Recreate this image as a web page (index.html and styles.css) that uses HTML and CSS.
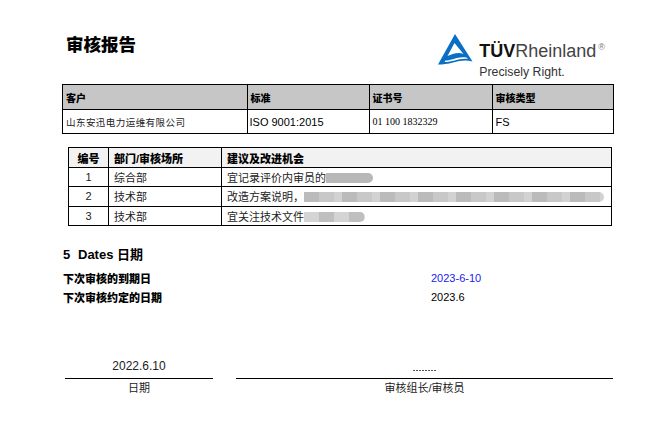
FILE: index.html
```html
<!DOCTYPE html>
<html lang="zh">
<head>
<meta charset="utf-8">
<title>审核报告</title>
<link rel="stylesheet" href="styles.css">
</head>
<body>
<main class="page">
  <header class="top">
    <h1 class="title">审核报告</h1>
    <div class="logo">
      <svg class="mark" viewBox="0 0 35 31" width="35" height="31" aria-hidden="true">
        <path fill="#0a6fc4" d="M17 0 L34.500 27.500 C28 25.500 22 26.500 15 28.500 C10 30 5 30.500 0 30.500 Z"/>
        <path fill="#fff" d="M16.500 9 L9.500 22 C14 20.500 20 17.500 25.500 20 Z"/>
        <path fill="#fff" d="M7.500 26.500 C14 26.500 20 22 28.500 23.500 L30 25 C22 23.500 15 28 6.500 28 Z"/>
      </svg>
      <div class="brand">
        <div class="brand-name"><b>TÜV</b>Rheinland<sup class="reg">®</sup></div>
        <div class="brand-tag">Precisely Right.</div>
      </div>
    </div>
  </header>

  <table class="info">
    <colgroup><col class="c1"><col class="c2"><col class="c3"><col class="c4"></colgroup>
    <tr class="shade"><th>客户</th><th>标准</th><th>证书号</th><th>审核类型</th></tr>
    <tr>
      <td class="serif-cjk">山东安迅电力运维有限公司</td>
      <td class="big tight">ISO 9001:2015</td>
      <td class="serif">01 100 1832329</td>
      <td class="big">FS</td>
    </tr>
  </table>

  <table class="findings">
    <colgroup><col class="n1"><col class="n2"><col></colgroup>
    <tr class="light"><th class="mid">编号</th><th>部门/审核场所</th><th>建议及改进机会</th></tr>
    <tr><td class="mid">1</td><td>综合部</td><td>宜记录评价内审员的<span class="blur w1"></span></td></tr>
    <tr><td class="mid">2</td><td>技术部</td><td>改造方案说明，<span class="blur w2"></span></td></tr>
    <tr><td class="mid">3</td><td>技术部</td><td>宜关注技术文件<span class="blur w3"></span></td></tr>
  </table>

  <h2 class="section"><span class="num">5</span>Dates 日期</h2>
  <dl class="dates">
    <div class="date-row"><dt>下次审核的到期日</dt><dd class="blue">2023-6-10</dd></div>
    <div class="date-row"><dt>下次审核约定的日期</dt><dd>2023.6</dd></div>
  </dl>

  <div class="signs">
    <div class="sign left">
      <div class="sign-val">2022.6.10</div>
      <div class="sign-label">日期</div>
    </div>
    <div class="sign right">
      <div class="sign-val"><span class="scribble"></span></div>
      <div class="sign-label">审核组长/审核员</div>
    </div>
  </div>
</main>
</body>
</html>
```
FILE: styles.css
```css
* { box-sizing: border-box; }
html, body { margin: 0; padding: 0; background: #fff; }
body {
  width: 660px;
  height: 425px;
  overflow: hidden;
  color: #000;
  font-family: "Liberation Sans", "Noto Sans CJK SC", sans-serif;
  font-size: 11px;
}
.page { padding: 34px 46px 0 62px; }

.top {
  display: flex;
  justify-content: space-between;
  align-items: flex-start;
  height: 50px;
}
.title {
  margin: 1px 0 0 4px;
  font-size: 17.500px;
  line-height: 20px;
  font-weight: 900;
}
.logo { display: flex; gap: 6px; margin-right: 9px; }
.mark { display: block; }
.brand { padding-top: 8px; }
.brand-name { font-size: 18px; line-height: 19px; white-space: nowrap; color: #444; }
.brand-name b { color: #111; }
.reg { font-size: 9px; line-height: 0; vertical-align: 7px; margin-left: 2px; color: #777; }
.brand-tag { font-size: 12.300px; line-height: 15px; margin-top: 4px; color: #333; }

table { border-collapse: collapse; table-layout: fixed; }
th, td { border: 1px solid #000; padding: 0 3px; text-align: left; overflow: hidden; white-space: nowrap; }

.info { width: 552px; }
.c1 { width: 184.500px; }
.c2 { width: 122px; }
.c3 { width: 123px; }
.shade th { height: 25px; background: #c6c6c6; font-size: 10px; font-weight: 900; }
.info td { height: 24px; }
.big { font-size: 11px; }
.tight { padding-left: 2px; }
.serif { font-family: "Liberation Serif", serif; font-size: 10px; }
.serif-cjk { font-family: "Noto Sans CJK SC", sans-serif; font-size: 9.500px; letter-spacing: 0.450px; color: #222; }

.findings { width: 544px; margin: 13px 0 0 6px; }
.n1 { width: 40px; }
.n2 { width: 113px; }
.findings th { height: 20px; font-size: 11px; background: #f2f2f2; padding-left: 5px; font-weight: 900; }
.findings td { height: 19.300px; padding-left: 5px; color: #222; }
.findings .mid { text-align: center; padding: 0; }
.blur {
  display: inline-block;
  height: 10px;
  vertical-align: -1px;
  background: repeating-linear-gradient(90deg, #bbb 0 15px, #c8c8c8 15px 30px, #d2d2d2 30px 38px);
  border-radius: 0 5px 5px 0;
  filter: blur(0.700px);
}
.w1 { width: 47px; background: #b8b8b8; }
.w2 { width: 300px; }
.w3 { width: 61px; background: repeating-linear-gradient(90deg, #d4d4d4 0 15px, #bfbfbf 15px 30px); }

.section {
  margin: 21px 0 0 1px;
  font-size: 13px;
  line-height: 16px;
  font-weight: 700;
}
.num { display: inline-block; width: 15px; }
.dates { margin: 6px 0 0 1px; }
.date-row { display: flex; height: 19px; align-items: center; }
.date-row dt { width: 368px; font-weight: 900; font-size: 11px; }
.date-row dd { margin: 0; font-size: 11px; }
.blue { color: #2020f0; }

.signs { display: flex; gap: 23px; margin: 50px 0 0 3px; }
.sign { text-align: center; }
.left { width: 148px; }
.right { width: 377px; }
.sign-val { height: 22px; line-height: 18px; border-bottom: 1px solid #000; font-size: 12px; color: #222; position: relative; }
.sign-label { font-size: 11px; line-height: 16px; color: #222; padding-top: 1px; }
.scribble { position: absolute; left: 177px; top: 13px; width: 23px; height: 1px; background: repeating-linear-gradient(90deg, #555 0 2px, #fff 2px 3px); }
```
